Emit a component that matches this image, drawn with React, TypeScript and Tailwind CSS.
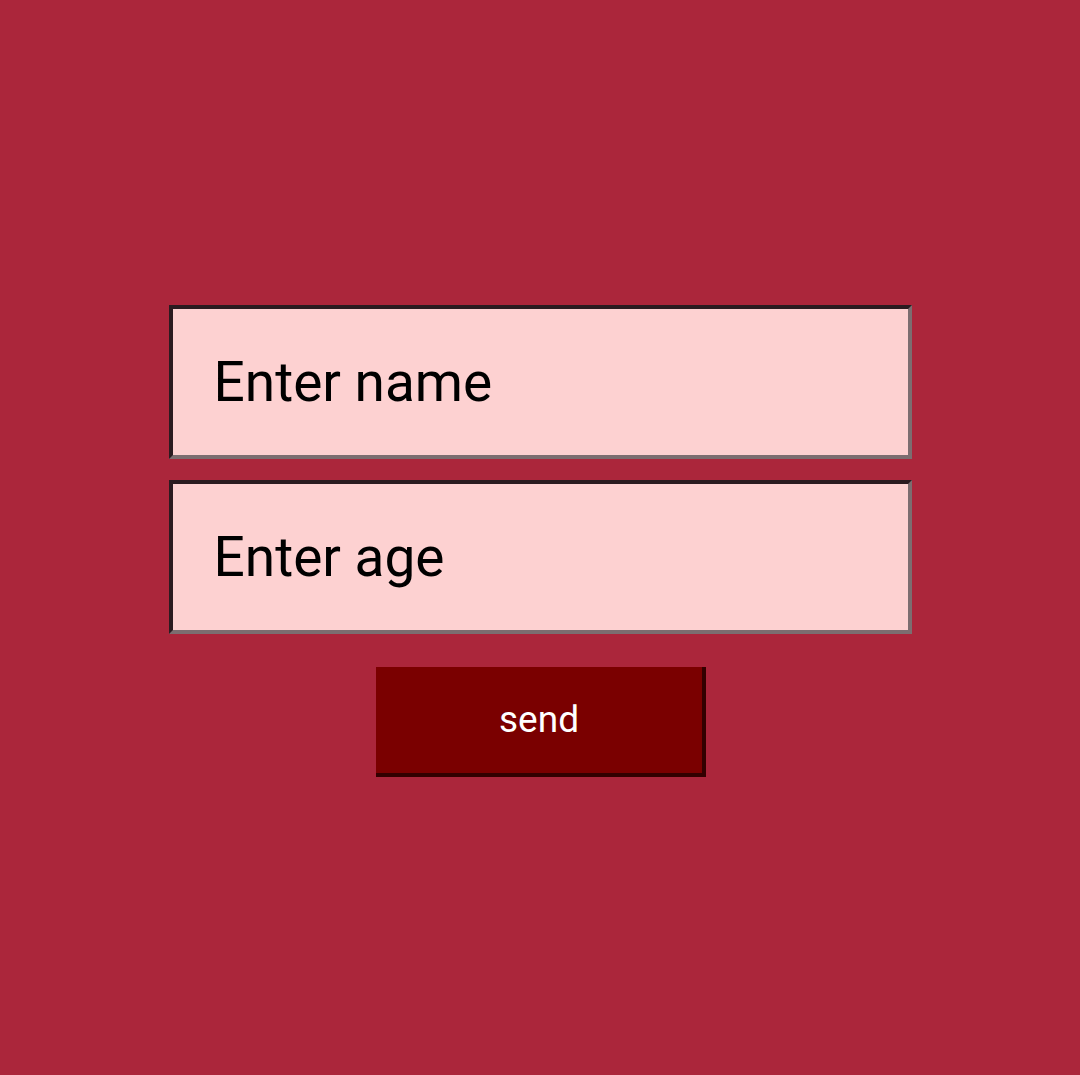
import React, { useState } from 'react';

const App: React.FC = () => {
  const [name, setName] = useState('');
  const [age, setAge] = useState('');

  return (
    <div className="min-h-screen w-full bg-[#ab263b] flex flex-col items-center pt-[305px] font-['Roboto',sans-serif]">
      <form
        onSubmit={(e) => e.preventDefault()}
        className="flex flex-col items-center"
      >
        <input
          type="text"
          placeholder="Enter name"
          value={name}
          onChange={(e) => setName(e.target.value)}
          className="w-[743px] h-[154px] bg-[#fdd1d1] border-4 border-t-[#2b1b20] border-l-[#2b1b20] border-r-[#7c6d70] border-b-[#7c6d70] pl-[41px] text-[55px] text-black placeholder-black outline-none"
        />
        <input
          type="text"
          placeholder="Enter age"
          value={age}
          onChange={(e) => setAge(e.target.value)}
          className="mt-[21px] w-[743px] h-[154px] bg-[#fdd1d1] border-4 border-t-[#2b1b20] border-l-[#2b1b20] border-r-[#7c6d70] border-b-[#7c6d70] pl-[41px] text-[55px] text-black placeholder-black outline-none"
        />
        <button
          type="submit"
          className="mt-[33px] ml-[2px] w-[330px] h-[110px] bg-[#7a0000] border-r-4 border-b-4 border-[#330000] text-white text-[37px]"
        >
          send
        </button>
      </form>
    </div>
  );
};

export default App;
